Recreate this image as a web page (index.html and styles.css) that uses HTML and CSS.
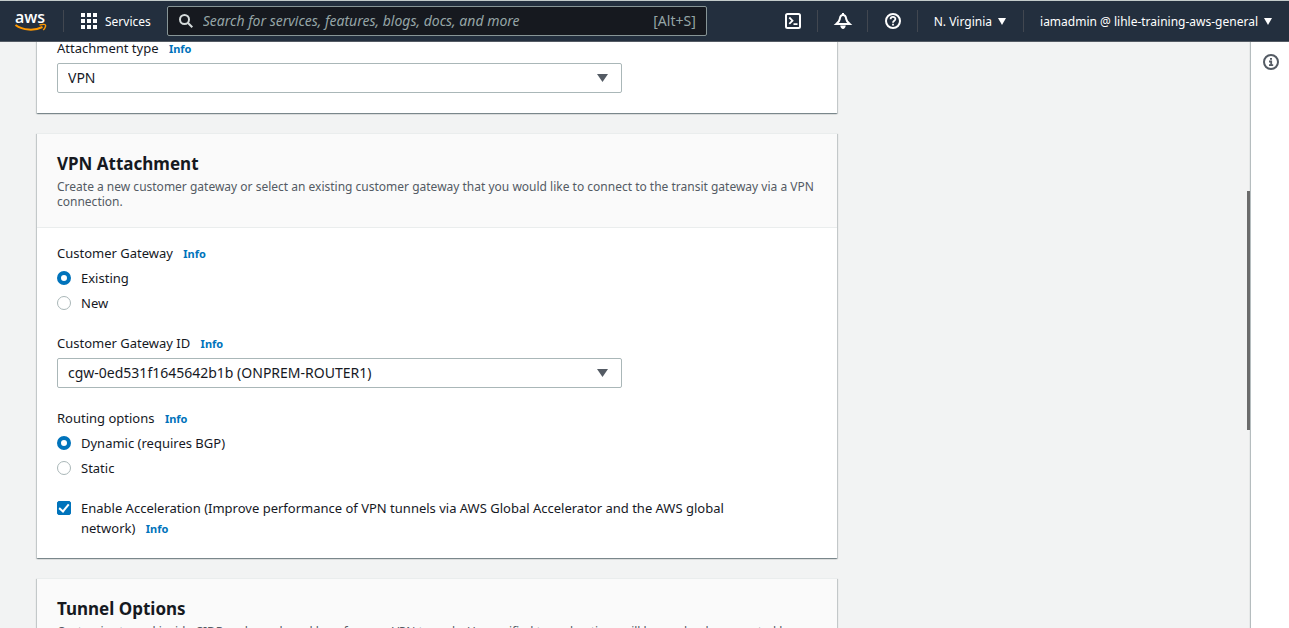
FILE: index.html
```html
<!DOCTYPE html>
<html lang="en">
<head>
<meta charset="utf-8">
<title>Create transit gateway attachment</title>
<link rel="stylesheet" href="styles.css">
</head>
<body>
<header class="topbar">
  <a class="logo" href="#" aria-label="AWS home">
    <svg width="32" height="30" viewBox="0 0 32 30">
      <text class="logo-text" x="15" y="17" text-anchor="middle">aws</text>
      <path d="M.5 19C8 24.500 19.500 25 27.500 21" fill="none" stroke="#f90" stroke-width="2"/>
      <path d="M24.500 19C27.500 18.200 30 18.200 30.500 19S30 22.400 28.200 24" fill="none" stroke="#f90" stroke-width="1.400"/>
    </svg>
  </a>
  <span class="divider"></span>
  <button class="top-btn services" type="button">
    <svg width="16" height="16" viewBox="0 0 16 16" fill="currentColor">
      <path d="M0 0h4v4H0zM6 0h4v4H6zM12 0h4v4h-4zM0 6h4v4H0zM6 6h4v4H6zM12 6h4v4h-4zM0 12h4v4H0zM6 12h4v4H6zM12 12h4v4h-4z"/>
    </svg>
    <span>Services</span>
  </button>
  <label class="search">
    <svg width="14" height="14" viewBox="0 0 14 14" fill="none" stroke="#d5dbdb" stroke-width="2">
      <circle cx="5.500" cy="5.500" r="4.500"/><path d="M9 9l4.300 4.300"/>
    </svg>
    <input class="search-input" type="search" aria-label="Search" placeholder="Search for services, features, blogs, docs, and more">
    <span class="shortcut">[Alt+S]</span>
  </label>
  <nav class="top-tools">
    <button class="top-btn tool" type="button" aria-label="CloudShell">
      <svg width="16" height="16" viewBox="0 0 16 16" fill="none" stroke="currentColor" stroke-width="2">
        <rect x="1" y="1" width="14" height="14" rx="1.500"/><path d="M4.300 4.500l3.200 3.200-3.200 3.200M8.500 11.200H12.500" stroke-width="1.800"/>
      </svg>
    </button>
    <span class="divider"></span>
    <button class="top-btn tool" type="button" aria-label="Notifications">
      <svg width="16" height="16" viewBox="0 0 16 16" fill="none" stroke="currentColor" stroke-width="2">
        <path d="M8 0v2M8 2C5.600 2 5 4 4.800 6 4.500 8.200 3.200 9.300 1.300 11H14.700C12.800 9.300 11.500 8.200 11.200 6 11 4 10.400 2 8 2z"/>
        <path d="M5.300 12.500C5.600 17 10.400 17 10.700 12.500z" fill="currentColor" stroke="none"/>
      </svg>
    </button>
    <span class="divider"></span>
    <button class="top-btn tool" type="button" aria-label="Help">
      <svg width="16" height="16" viewBox="0 0 16 16" fill="none" stroke="currentColor" stroke-width="2">
        <circle cx="8" cy="8" r="7"/><path d="M5.600 6.300C5.600 3.200 10.400 3.300 10.400 6 10.400 7.800 8 7.700 8 9.700M8 10.800v1.800" stroke-width="1.800"/>
      </svg>
    </button>
    <span class="divider"></span>
    <button class="top-btn menu" type="button"><span>N. Virginia</span>
      <svg width="8" height="7" viewBox="0 0 8 7"><path d="M0 0h8L4 7z" fill="currentColor"/></svg>
    </button>
    <span class="divider"></span>
    <button class="top-btn menu" type="button"><span>iamadmin @ lihle-training-aws-general</span>
      <svg width="8" height="7" viewBox="0 0 8 7"><path d="M0 0h8L4 7z" fill="currentColor"/></svg>
    </button>
  </nav>
</header>

<div class="shell">
  <main class="content">
    <section class="card">
      <div class="card-body card-body-continued">
        <div class="field">
          <div class="label-row"><label for="type">Attachment type</label> <a class="info" href="#">Info</a></div>
          <div class="select-wrap">
            <select id="type"><option>VPN</option></select>
            <svg class="caret" width="11" height="8" viewBox="0 0 11 8"><path d="M0 0h11L5.500 8z"/></svg>
          </div>
        </div>
      </div>
    </section>

    <section class="card">
      <div class="card-head">
        <h2>VPN Attachment</h2>
        <p>Create a new customer gateway or select an existing customer gateway that you would like to connect to the transit gateway via a VPN connection.</p>
      </div>
      <div class="card-body">
        <div class="field" role="radiogroup" aria-labelledby="cgw-label">
          <div class="label-row"><span id="cgw-label">Customer Gateway</span> <a class="info" href="#">Info</a></div>
          <label class="option"><input type="radio" name="cgw" checked><span>Existing</span></label>
          <label class="option"><input type="radio" name="cgw"><span>New</span></label>
        </div>
        <div class="field">
          <div class="label-row"><label for="cgw-id">Customer Gateway ID</label> <a class="info" href="#">Info</a></div>
          <div class="select-wrap">
            <select id="cgw-id"><option>cgw-0ed531f1645642b1b (ONPREM-ROUTER1)</option></select>
            <svg class="caret" width="11" height="8" viewBox="0 0 11 8"><path d="M0 0h11L5.500 8z"/></svg>
          </div>
        </div>
        <div class="field" role="radiogroup" aria-labelledby="routing-label">
          <div class="label-row"><span id="routing-label">Routing options</span> <a class="info" href="#">Info</a></div>
          <label class="option"><input type="radio" name="routing" checked><span>Dynamic (requires BGP)</span></label>
          <label class="option"><input type="radio" name="routing"><span>Static</span></label>
        </div>
        <div class="option option-long">
          <input type="checkbox" id="accel" checked>
          <div><label for="accel">Enable Acceleration (Improve performance of VPN tunnels via AWS Global Accelerator and the AWS global network)</label> <a class="info" href="#">Info</a></div>
        </div>
      </div>
    </section>

    <section class="card">
      <div class="card-head">
        <h2>Tunnel Options</h2>
        <p>Customize tunnel inside CIDR and pre-shared keys for your VPN tunnels. Unspecified tunnel options will be randomly generated by Amazon.</p>
      </div>
    </section>
    <span class="scroll-thumb"></span>
  </main>
  <aside class="help-rail">
    <button class="rail-btn" type="button" aria-label="Open help panel">
      <svg width="16" height="16" viewBox="0 0 16 16" fill="none" stroke="currentColor" stroke-width="2">
        <circle cx="8" cy="8" r="7"/><path d="M7 4.800h2M6 7.500h2.200V11M6 11.200h4.200" stroke-width="1.800"/>
      </svg>
    </button>
  </aside>
</div>
</body>
</html>
```
FILE: styles.css
```css
* { box-sizing: border-box; }

body {
  margin: 0;
  height: 100vh;
  display: flex;
  flex-direction: column;
  overflow: hidden;
  background: #f2f3f3;
  color: #16191f;
  font: 13px/20px "Noto Sans", "Open Sans", sans-serif;
}

button, input, select { font: inherit; color: inherit; margin: 0; }
svg { display: block; flex: none; overflow: visible; }
h2, p { margin: 0; }

/* Top navigation */
.topbar {
  position: relative;
  z-index: 2;
  flex: none;
  height: 42px;
  display: flex;
  align-items: center;
  padding: 0 17px 0 15px;
  background: #232f3e;
  border-top: 1px solid #c3cbca;
  border-bottom: 1px solid #545b64;
  color: #fff;
  font-size: 12px;
}
.logo { margin-right: 16px; color: #fff; }
.logo-text { font: 600 16px/16px "Open Sans", sans-serif; fill: #fff; }
.divider { flex: none; width: 1px; height: 22px; background: #414750; }
.top-btn {
  display: flex;
  align-items: center;
  flex: none;
  padding: 0;
  border: 0;
  background: none;
  white-space: nowrap;
}
.top-btn span { padding-top: 2px; }
.services { gap: 8px; margin: 0 16px 0 17px; }
.search {
  flex: 0 1 540px;
  min-width: 0;
  height: 30px;
  display: flex;
  align-items: center;
  gap: 10px;
  padding: 0 10px 0 11px;
  background: #16191f;
  border: 1px solid #879596;
  border-radius: 2px;
  color: #95a5a6;
  font-size: 14px;
}
.search-input {
  flex: 1;
  min-width: 0;
  padding: 0;
  border: 0;
  outline: 0;
  background: none;
}
.search-input::placeholder { color: #95a5a6; font-style: italic; opacity: 1; }
.top-tools { display: flex; align-items: center; margin-left: auto; }
.tool { margin: 0 16px 0 17px; }
.menu { gap: 6px; margin-left: 16px; }
.menu + .divider { margin-left: 17px; }

/* Page body */
.shell { flex: 1; min-height: 0; display: flex; }
.content {
  position: relative;
  flex: 1;
  min-width: 0;
  padding-left: 37px;
  display: flex;
  flex-direction: column;
  gap: 20px;
  margin-top: -4px;
}
.card {
  flex: none;
  width: 100%;
  max-width: 800px;
  background: #fff;
  border-top: 1px solid #eaeded;
  box-shadow: 0 1px 1px 0 rgba(0, 28, 36, .3), 1px 1px 1px 0 rgba(0, 28, 36, .15), -1px 1px 1px 0 rgba(0, 28, 36, .15);
}
.card:first-child { border-top: 0; }
.card-head {
  padding: 19px 20px 18px;
  background: #fafafa;
  border-bottom: 1px solid #eaeded;
}
.card-head h2 { font-size: 17px; line-height: 22px; font-weight: 700; margin-bottom: 4px; }
.card-head p { font-size: 12px; line-height: 15px; color: #545b64; }
.card-body {
  padding: 15px 20px 20px;
  display: flex;
  flex-direction: column;
  gap: 20px;
}
.card-body-continued { padding-top: 0; }
.field { display: flex; flex-direction: column; gap: 5px; }
.info {
  margin-left: 7px;
  color: #0073bb;
  font-size: 11px;
  line-height: 16px;
  font-weight: 700;
  text-decoration: none;
}
.select-wrap { display: grid; align-items: center; width: 100%; max-width: 565px; }
.select-wrap > * { grid-area: 1 / 1; }
select {
  appearance: none;
  width: 100%;
  height: 30px;
  padding: 0 30px 0 10px;
  border: 1px solid #aab7b8;
  border-radius: 2px;
  background: #fff;
  font-size: 14px;
}
.caret { justify-self: end; margin-right: 14px; fill: #545b64; pointer-events: none; }
.option { display: flex; align-items: flex-start; gap: 10px; }
.option-long { padding-right: 40px; }
.option input {
  appearance: none;
  flex: none;
  width: 14px;
  height: 14px;
  margin-top: 3px;
  border: 1px solid #aab7b8;
  background: #fff;
}
.option input[type="radio"] { border-radius: 50%; }
.option input[type="radio"]:checked { border: 4px solid #0073bb; }
.option input[type="checkbox"] {
  display: flex;
  justify-content: center;
  align-items: flex-start;
  border-radius: 2px;
}
.option input[type="checkbox"]:checked { background: #0073bb; border-color: #0073bb; }
.option input[type="checkbox"]:checked::before {
  content: "";
  box-sizing: border-box;
  width: 6px;
  height: 10px;
  border: solid #fff;
  border-width: 0 2px 2px 0;
  transform: rotate(40deg);
}
.scroll-thumb {
  position: absolute;
  top: 153px;
  right: 1px;
  width: 3px;
  height: 239px;
  background: #6b6b6b;
}
.help-rail {
  flex: none;
  width: 38px;
  padding: 12px 10px 0 12px;
  background: #fff;
  box-shadow: -1px 0 1px rgba(0, 28, 36, .25);
}
.rail-btn { padding: 0; border: 0; background: none; color: #545b64; }
```
